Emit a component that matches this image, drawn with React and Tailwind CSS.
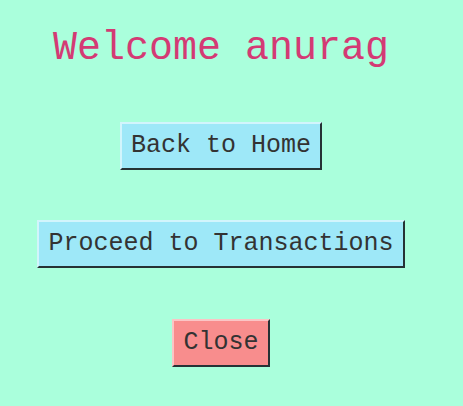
import React from 'react';

const MONO = 'font-["Liberation_Mono",monospace]';

const BTN = `${MONO} text-[25px] leading-[28px] px-[9px] py-[8px] border-2 border-t-[#d2f5fc] border-l-[#d2f5fc] border-b-[#263235] border-r-[#263235] text-[#333]`;

export default function App() {
  return (
    <div className="min-h-[406px] w-[463px] bg-[#aaffdc]">
      <div className="w-[442px] flex flex-col items-center pt-[26px]">
        <h1 className={`${MONO} text-[40px] leading-[46px] text-[#d43a74]`}>
          Welcome anurag
        </h1>
        <button className={`${BTN} bg-[#9ee8f8] mt-[50px]`}>Back to Home</button>
        <button className={`${BTN} bg-[#9ee8f8] mt-[50px]`}>Proceed to Transactions</button>
        <button className={`${BTN} bg-[#f88d8d] mt-[51px] border-t-[#fbc5c5] border-l-[#fbc5c5]`}>Close</button>
      </div>
    </div>
  );
}
